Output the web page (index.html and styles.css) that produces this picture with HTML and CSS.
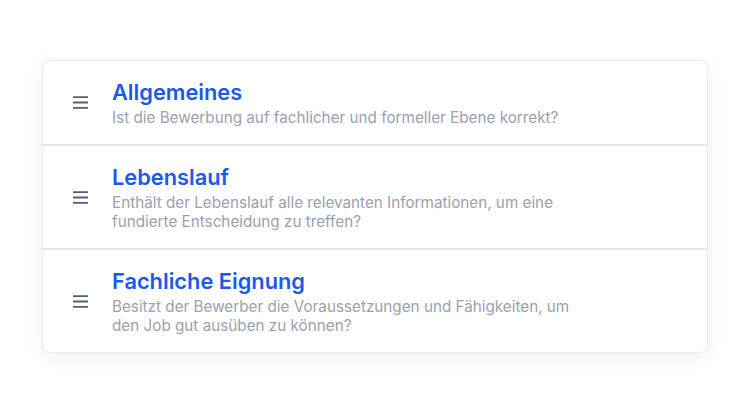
FILE: index.html
```html
<!DOCTYPE html>
<html lang="de">
<head>
<meta charset="utf-8">
<link rel="stylesheet" href="styles.css">
</head>
<body>
<div class="page">
  <div class="card">
    <div class="row">
      <svg class="icon" width="15" height="13" viewBox="0 0 15 13"><path d="M0 1.2H15M0 6.5H15M0 11.8H15" stroke="#566074" stroke-width="1.8" fill="none"/></svg>
      <div class="text">
        <div class="title">Allgemeines</div>
        <div class="sub">Ist die Bewerbung auf fachlicher und formeller Ebene korrekt?</div>
      </div>
    </div>
    <div class="row">
      <svg class="icon" width="15" height="13" viewBox="0 0 15 13"><path d="M0 1.2H15M0 6.5H15M0 11.8H15" stroke="#566074" stroke-width="1.8" fill="none"/></svg>
      <div class="text">
        <div class="title">Lebenslauf</div>
        <div class="sub">Enthält der Lebenslauf alle relevanten Informationen, um eine<br>fundierte Entscheidung zu treffen?</div>
      </div>
    </div>
    <div class="row">
      <svg class="icon" width="15" height="13" viewBox="0 0 15 13"><path d="M0 1.2H15M0 6.5H15M0 11.8H15" stroke="#566074" stroke-width="1.8" fill="none"/></svg>
      <div class="text">
        <div class="title">Fachliche Eignung</div>
        <div class="sub">Besitzt der Bewerber die Voraussetzungen und Fähigkeiten, um<br>den Job gut ausüben zu können?</div>
      </div>
    </div>
  </div>
</div>
</body>
</html>
```
FILE: styles.css
```css
html, body {
  margin: 0;
  padding: 0;
  background: #ffffff;
}
.page {
  width: 750px;
  height: 413px;
  padding: 60px 42px 0 42px;
  box-sizing: border-box;
  font-family: Inter, "Open Sans", sans-serif;
}
.card {
  background: #fff;
  border: 1px solid #ececec;
  border-radius: 7px;
  box-shadow: 0 4px 18px rgba(0, 0, 0, 0.07);
  overflow: hidden;
}
.row {
  display: flex;
  align-items: center;
  gap: 24px;
  padding: 17px 31px 17px 30px;
  border-bottom: 2px solid #e4e6e9;
}
.row:last-child {
  border-bottom: none;
}
.icon {
  flex: none;
}
.title {
  font-size: 21.8px;
  line-height: 28px;
  font-weight: 600;
  color: #1b5ae9;
}
.sub {
  margin-top: 2px;
  font-size: 15.25px;
  line-height: 19px;
  color: #9aa1ad;
}
```
